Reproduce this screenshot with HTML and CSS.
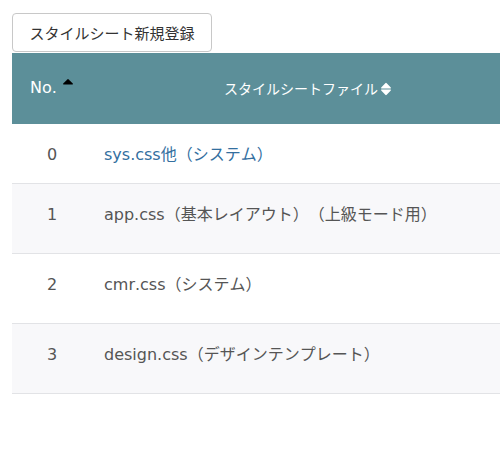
FILE: index.html
```html
<!DOCTYPE html>
<html lang="ja">
<head>
<meta charset="utf-8">
<link rel="stylesheet" href="styles.css">
</head>
<body>
<div class="page">
  <button class="btn" type="button">スタイルシート新規登録</button>
  <table class="list">
    <thead>
      <tr>
        <th class="col-no">No.<svg class="sort-up" width="12" height="14" viewBox="0 0 12 14"><path d="M1.2 6.6 L5.3 2.4 Q6 1.7 6.7 2.4 L10.8 6.6 Q11.3 7.4 10.4 7.6 L1.6 7.6 Q0.7 7.4 1.2 6.6 Z" fill="#000"/></svg></th>
        <th class="col-file">スタイルシートファイル<svg class="sort" width="12" height="14" viewBox="0 0 12 14"><path d="M1.2 5.4 L5.3 1.2 Q6 0.5 6.7 1.2 L10.8 5.4 Q11.3 6.2 10.4 6.4 L1.6 6.4 Q0.7 6.2 1.2 5.4 Z M1.2 8.6 L5.3 12.8 Q6 13.5 6.7 12.8 L10.8 8.6 Q11.3 7.8 10.4 7.6 L1.6 7.6 Q0.7 7.8 1.2 8.6 Z" fill="#fff"/></svg></th>
      </tr>
    </thead>
    <tbody>
      <tr class="first">
        <td class="num">0</td>
        <td class="name"><a class="link" href="#">sys.css他（システム）</a></td>
      </tr>
      <tr class="tall striped">
        <td class="num">1</td>
        <td class="name">app.css（基本レイアウト）（上級モード用）</td>
      </tr>
      <tr class="tall">
        <td class="num">2</td>
        <td class="name">cmr.css（システム）</td>
      </tr>
      <tr class="tall striped">
        <td class="num">3</td>
        <td class="name">design.css（デザインテンプレート）</td>
      </tr>
    </tbody>
  </table>
</div>
</body>
</html>
```

FILE: styles.css
```css
html, body {
  margin: 0;
  padding: 0;
  background: #fff;
  overflow: hidden;
}

body {
  font-family: "DejaVu Sans", "Noto Sans CJK JP", sans-serif;
  font-size: 16px;
  color: #555;
  font-kerning: none;
  text-spacing-trim: space-all;
}

.page {
  padding: 13px 0 0 12px;
}

.btn {
  display: block;
  box-sizing: border-box;
  width: 200px;
  height: 39px;
  padding: 0 10px;
  margin: 0 0 1px 0;
  background: #fff;
  border: 1px solid #c8c8c8;
  border-radius: 4px;
  font-family: "Noto Sans CJK JP", sans-serif;
  font-size: 15px;
  line-height: 22px;
  color: #333;
  text-align: center;
}

.list {
  width: 512px;
  border-collapse: collapse;
  table-layout: fixed;
}

.list thead th {
  background: #5c8f99;
  color: #fff;
  font-weight: normal;
  font-size: 14px;
  line-height: 24px;
  padding: 23px 0 24px;
  text-align: center;
  white-space: nowrap;
}

.col-no {
  width: 80px;
}

.list thead th.col-no {
  font-family: "DejaVu Sans", sans-serif;
  font-size: 16px;
}

.list thead th.col-file {
  font-family: "Noto Sans CJK JP", sans-serif;
}

.sort-up {
  vertical-align: -2px;
  margin-left: 5px;
  position: relative;
  top: -4px;
}

.sort {
  vertical-align: -2px;
  margin-left: 2px;
}

.list td {
  line-height: 24px;
  padding: 19px 0 16px;
  border-bottom: 1px solid #e2e3e6;
  vertical-align: top;
  white-space: nowrap;
}

.list tr.tall td {
  padding-bottom: 26px;
}

.list tr.striped td {
  background: #f8f8fa;
}

.num {
  text-align: center;
}

.name {
  text-align: left;
  padding-left: 12px !important;
}

.link {
  color: #336f9f;
  text-decoration: none;
}
```
